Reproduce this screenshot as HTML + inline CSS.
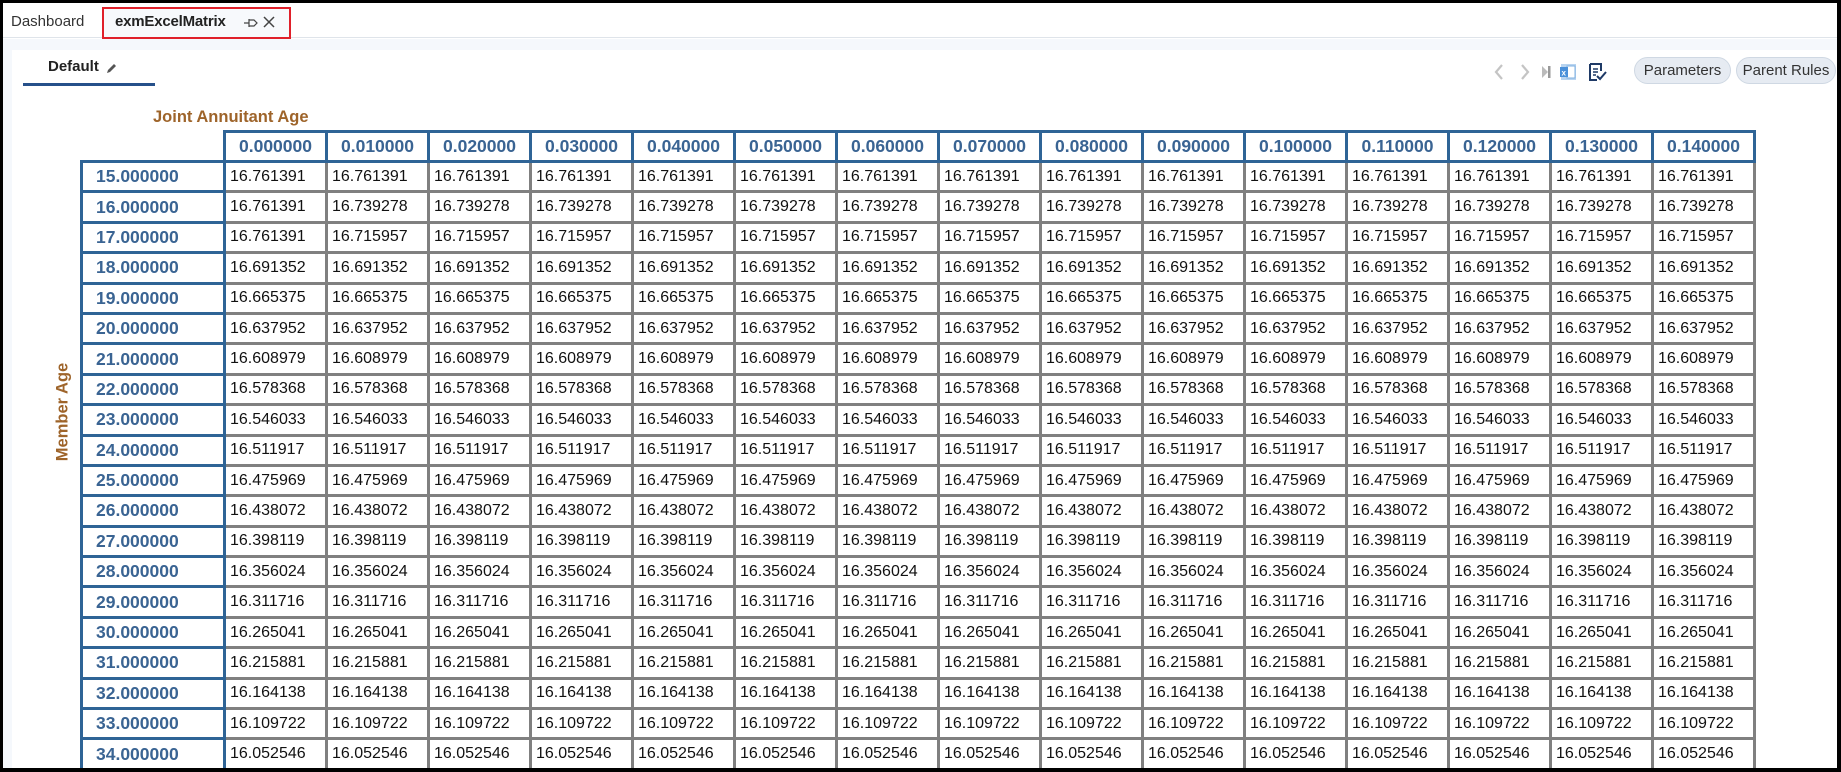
<!DOCTYPE html>
<html><head><meta charset="utf-8"><style>
*{margin:0;padding:0;box-sizing:border-box}
html,body{width:1841px;height:772px;overflow:hidden;background:#000;font-family:"Liberation Sans",Arial,sans-serif}
#frame{position:absolute;left:3px;top:3px;width:1834px;height:765px;background:#fff;overflow:hidden}
#tabbar{position:absolute;left:0;top:0;width:100%;height:35px;background:#fff;border-bottom:1px solid #dfe4ea}
#band{position:absolute;left:0;top:36px;width:100%;height:900px;background:#f5f8fc}
#panel{position:absolute;left:9px;top:47px;width:1830px;height:900px;background:#fff}
.abs{position:absolute}
table{position:absolute;left:77px;top:127px;border-collapse:collapse;table-layout:fixed}
td,th{height:30.4px;font-size:16px;color:#111;border:3px solid #808080;padding:0 0 0 4px;text-align:left;font-weight:normal;white-space:nowrap;overflow:hidden}
th{border-color:#2f6496;color:#3a6493;font-weight:bold;font-size:17.5px}
thead th{text-align:center;height:30px;padding:0}
tbody th{padding-left:13px}
th.e{border:none;border-bottom:3px solid #2f6496;border-right:3px solid #2f6496}
.pill{position:absolute;top:54px;height:27px;border:1px solid #cfd8e3;background:#e6ebf2;border-radius:14px;font-size:15px;color:#333;line-height:25px;text-align:center}
</style></head><body><div id="frame">
<div id="band"></div>
<div id="tabbar"></div>
<div class="abs" style="left:8px;top:10px;font-size:15px;color:#333">Dashboard</div>
<div class="abs" style="left:99px;top:4px;width:189px;height:32px;border:2px solid #e0202a;background:#f7f9fc"></div>
<div class="abs" style="left:112px;top:10px;font-size:15px;color:#222;font-weight:bold;letter-spacing:-0.2px">exmExcelMatrix</div>
<svg class="abs" style="left:240px;top:14px" width="16" height="12" viewBox="0 0 16 12"><path d="M1 6H6M6 2V10M6 3H11L14 6L11 9H6" fill="none" stroke="#444" stroke-width="1.2"/></svg>
<svg class="abs" style="left:260px;top:13px" width="12" height="12" viewBox="0 0 12 12"><path d="M1 1L11 11M11 1L1 11" stroke="#444" stroke-width="1.5"/></svg>
<div id="panel"></div>
<div class="abs" style="left:45px;top:55px;font-size:15px;color:#222;font-weight:bold">Default</div>
<svg class="abs" style="left:103px;top:60px" width="11" height="11" viewBox="0 0 11 11"><path d="M1 10L2 7L8 1L10 3L4 9Z" fill="#555"/></svg>
<div class="abs" style="left:20px;top:80px;width:132px;height:3px;background:#26508a"></div>
<svg class="abs" style="left:1488px;top:58px" width="130" height="22" viewBox="0 0 130 22">
<path d="M11 4L5 11L11 18" fill="none" stroke="#c4c4c4" stroke-width="2.2"/>
<path d="M31 4L37 11L31 18" fill="none" stroke="#c4c4c4" stroke-width="2.2"/>
<path d="M51 5L57 11L51 17Z" fill="#bbb"/><rect x="57" y="5" width="2.5" height="12" fill="#999"/>
<rect x="70" y="3" width="15" height="16" fill="#b8d4f0"/><rect x="76" y="5" width="8" height="12" fill="#fff" stroke="#7fb0e0" stroke-width="1"/><rect x="69" y="6" width="8" height="10" fill="#4a90d9"/><text x="70.5" y="14.5" font-size="8" fill="#fff" font-weight="bold" font-family="Liberation Sans">x</text>
<path d="M99 3H110V10M99 3V19H106" fill="none" stroke="#1f3a66" stroke-width="2"/><path d="M102 8H107M102 11H107M102 14H105" stroke="#1f3a66" stroke-width="1.5"/><path d="M106 15L109 18L115 11" fill="none" stroke="#1f3a66" stroke-width="2"/>
</svg>
<div class="pill" style="left:1631px;width:97px">Parameters</div>
<div class="pill" style="left:1733px;width:100px">Parent Rules</div>
<div class="abs" style="left:150px;top:105px;font-size:16.5px;font-weight:bold;color:#9e642a">Joint Annuitant Age</div>
<div class="abs" style="left:60px;top:409px;font-size:16.5px;font-weight:bold;color:#9e642a;transform:translate(-50%,-50%) rotate(-90deg);white-space:nowrap">Member Age</div>
<table>
<colgroup><col style="width:143px"><col span="15" style="width:102px"></colgroup>
<thead><tr><th class="e"></th><th>0.000000</th><th>0.010000</th><th>0.020000</th><th>0.030000</th><th>0.040000</th><th>0.050000</th><th>0.060000</th><th>0.070000</th><th>0.080000</th><th>0.090000</th><th>0.100000</th><th>0.110000</th><th>0.120000</th><th>0.130000</th><th>0.140000</th></tr></thead>
<tbody>
<tr><th>15.000000</th><td>16.761391</td><td>16.761391</td><td>16.761391</td><td>16.761391</td><td>16.761391</td><td>16.761391</td><td>16.761391</td><td>16.761391</td><td>16.761391</td><td>16.761391</td><td>16.761391</td><td>16.761391</td><td>16.761391</td><td>16.761391</td><td>16.761391</td></tr>
<tr><th>16.000000</th><td>16.761391</td><td>16.739278</td><td>16.739278</td><td>16.739278</td><td>16.739278</td><td>16.739278</td><td>16.739278</td><td>16.739278</td><td>16.739278</td><td>16.739278</td><td>16.739278</td><td>16.739278</td><td>16.739278</td><td>16.739278</td><td>16.739278</td></tr>
<tr><th>17.000000</th><td>16.761391</td><td>16.715957</td><td>16.715957</td><td>16.715957</td><td>16.715957</td><td>16.715957</td><td>16.715957</td><td>16.715957</td><td>16.715957</td><td>16.715957</td><td>16.715957</td><td>16.715957</td><td>16.715957</td><td>16.715957</td><td>16.715957</td></tr>
<tr><th>18.000000</th><td>16.691352</td><td>16.691352</td><td>16.691352</td><td>16.691352</td><td>16.691352</td><td>16.691352</td><td>16.691352</td><td>16.691352</td><td>16.691352</td><td>16.691352</td><td>16.691352</td><td>16.691352</td><td>16.691352</td><td>16.691352</td><td>16.691352</td></tr>
<tr><th>19.000000</th><td>16.665375</td><td>16.665375</td><td>16.665375</td><td>16.665375</td><td>16.665375</td><td>16.665375</td><td>16.665375</td><td>16.665375</td><td>16.665375</td><td>16.665375</td><td>16.665375</td><td>16.665375</td><td>16.665375</td><td>16.665375</td><td>16.665375</td></tr>
<tr><th>20.000000</th><td>16.637952</td><td>16.637952</td><td>16.637952</td><td>16.637952</td><td>16.637952</td><td>16.637952</td><td>16.637952</td><td>16.637952</td><td>16.637952</td><td>16.637952</td><td>16.637952</td><td>16.637952</td><td>16.637952</td><td>16.637952</td><td>16.637952</td></tr>
<tr><th>21.000000</th><td>16.608979</td><td>16.608979</td><td>16.608979</td><td>16.608979</td><td>16.608979</td><td>16.608979</td><td>16.608979</td><td>16.608979</td><td>16.608979</td><td>16.608979</td><td>16.608979</td><td>16.608979</td><td>16.608979</td><td>16.608979</td><td>16.608979</td></tr>
<tr><th>22.000000</th><td>16.578368</td><td>16.578368</td><td>16.578368</td><td>16.578368</td><td>16.578368</td><td>16.578368</td><td>16.578368</td><td>16.578368</td><td>16.578368</td><td>16.578368</td><td>16.578368</td><td>16.578368</td><td>16.578368</td><td>16.578368</td><td>16.578368</td></tr>
<tr><th>23.000000</th><td>16.546033</td><td>16.546033</td><td>16.546033</td><td>16.546033</td><td>16.546033</td><td>16.546033</td><td>16.546033</td><td>16.546033</td><td>16.546033</td><td>16.546033</td><td>16.546033</td><td>16.546033</td><td>16.546033</td><td>16.546033</td><td>16.546033</td></tr>
<tr><th>24.000000</th><td>16.511917</td><td>16.511917</td><td>16.511917</td><td>16.511917</td><td>16.511917</td><td>16.511917</td><td>16.511917</td><td>16.511917</td><td>16.511917</td><td>16.511917</td><td>16.511917</td><td>16.511917</td><td>16.511917</td><td>16.511917</td><td>16.511917</td></tr>
<tr><th>25.000000</th><td>16.475969</td><td>16.475969</td><td>16.475969</td><td>16.475969</td><td>16.475969</td><td>16.475969</td><td>16.475969</td><td>16.475969</td><td>16.475969</td><td>16.475969</td><td>16.475969</td><td>16.475969</td><td>16.475969</td><td>16.475969</td><td>16.475969</td></tr>
<tr><th>26.000000</th><td>16.438072</td><td>16.438072</td><td>16.438072</td><td>16.438072</td><td>16.438072</td><td>16.438072</td><td>16.438072</td><td>16.438072</td><td>16.438072</td><td>16.438072</td><td>16.438072</td><td>16.438072</td><td>16.438072</td><td>16.438072</td><td>16.438072</td></tr>
<tr><th>27.000000</th><td>16.398119</td><td>16.398119</td><td>16.398119</td><td>16.398119</td><td>16.398119</td><td>16.398119</td><td>16.398119</td><td>16.398119</td><td>16.398119</td><td>16.398119</td><td>16.398119</td><td>16.398119</td><td>16.398119</td><td>16.398119</td><td>16.398119</td></tr>
<tr><th>28.000000</th><td>16.356024</td><td>16.356024</td><td>16.356024</td><td>16.356024</td><td>16.356024</td><td>16.356024</td><td>16.356024</td><td>16.356024</td><td>16.356024</td><td>16.356024</td><td>16.356024</td><td>16.356024</td><td>16.356024</td><td>16.356024</td><td>16.356024</td></tr>
<tr><th>29.000000</th><td>16.311716</td><td>16.311716</td><td>16.311716</td><td>16.311716</td><td>16.311716</td><td>16.311716</td><td>16.311716</td><td>16.311716</td><td>16.311716</td><td>16.311716</td><td>16.311716</td><td>16.311716</td><td>16.311716</td><td>16.311716</td><td>16.311716</td></tr>
<tr><th>30.000000</th><td>16.265041</td><td>16.265041</td><td>16.265041</td><td>16.265041</td><td>16.265041</td><td>16.265041</td><td>16.265041</td><td>16.265041</td><td>16.265041</td><td>16.265041</td><td>16.265041</td><td>16.265041</td><td>16.265041</td><td>16.265041</td><td>16.265041</td></tr>
<tr><th>31.000000</th><td>16.215881</td><td>16.215881</td><td>16.215881</td><td>16.215881</td><td>16.215881</td><td>16.215881</td><td>16.215881</td><td>16.215881</td><td>16.215881</td><td>16.215881</td><td>16.215881</td><td>16.215881</td><td>16.215881</td><td>16.215881</td><td>16.215881</td></tr>
<tr><th>32.000000</th><td>16.164138</td><td>16.164138</td><td>16.164138</td><td>16.164138</td><td>16.164138</td><td>16.164138</td><td>16.164138</td><td>16.164138</td><td>16.164138</td><td>16.164138</td><td>16.164138</td><td>16.164138</td><td>16.164138</td><td>16.164138</td><td>16.164138</td></tr>
<tr><th>33.000000</th><td>16.109722</td><td>16.109722</td><td>16.109722</td><td>16.109722</td><td>16.109722</td><td>16.109722</td><td>16.109722</td><td>16.109722</td><td>16.109722</td><td>16.109722</td><td>16.109722</td><td>16.109722</td><td>16.109722</td><td>16.109722</td><td>16.109722</td></tr>
<tr><th>34.000000</th><td>16.052546</td><td>16.052546</td><td>16.052546</td><td>16.052546</td><td>16.052546</td><td>16.052546</td><td>16.052546</td><td>16.052546</td><td>16.052546</td><td>16.052546</td><td>16.052546</td><td>16.052546</td><td>16.052546</td><td>16.052546</td><td>16.052546</td></tr>
</tbody></table>
</div></body></html>
